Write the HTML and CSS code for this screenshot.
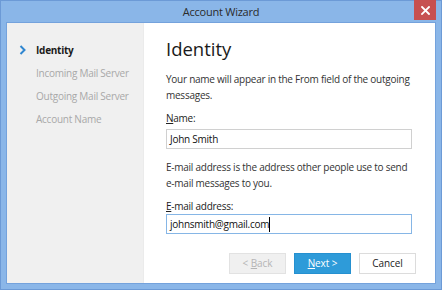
FILE: index.html
```html
<!DOCTYPE html>
<html>
<head>
<meta charset="utf-8">
<link rel="stylesheet" href="styles.css">
</head>
<body>
<div class="window">
  <div class="titlebar">
    <span></span>
    <span class="title">Account Wizard</span>
    <span class="close"><svg width="9" height="9" viewBox="0 0 9 9"><path d="M1 1 L8 8 M8 1 L1 8" stroke="#fff" stroke-width="1.8" stroke-linecap="square"/></svg></span>
  </div>
  <div class="client">
    <ul class="steps">
      <li class="step active"><svg class="chev" width="8" height="10" viewBox="0 0 8 10"><path d="M1.5 1 L5.5 5 L1.5 9" fill="none" stroke="#2f86d0" stroke-width="2"/></svg><span>Identity</span></li>
      <li class="step"><span></span><span>Incoming Mail Server</span></li>
      <li class="step"><span></span><span>Outgoing Mail Server</span></li>
      <li class="step"><span></span><span>Account Name</span></li>
    </ul>
    <div class="page">
      <div class="form">
        <h1 class="heading">Identity</h1>
        <p class="info">Your name will appear in the From field of the outgoing<br>messages.</p>
        <label class="label"><u>N</u>ame:</label>
        <div class="field">John Smith</div>
        <p class="info info2">E-mail address is the address other people use to send<br>e-mail messages to you.</p>
        <label class="label"><u>E</u>-mail address:</label>
        <div class="field focused">johnsmith@gmail.com<span class="caret"></span></div>
      </div>
      <div class="buttons">
        <button class="btn disabled">&lt; <u>B</u>ack</button>
        <button class="btn primary"><u>N</u>ext &gt;</button>
        <button class="btn">Cancel</button>
      </div>
    </div>
  </div>
</div>
</body>
</html>
```
FILE: styles.css
```css
html, body {
  margin: 0;
  padding: 0;
}
body {
  font-family: "Open Sans", "Noto Sans", sans-serif;
  font-size: 10px;
  letter-spacing: -0.25px;
  color: #222;
}
.window {
  width: 442px;
  height: 290px;
  box-sizing: border-box;
  background: #8ab6e8;
  border: 1px solid #6c9ad6;
  display: flex;
  flex-direction: column;
}
.titlebar {
  height: 21px;
  display: grid;
  grid-template-columns: 1fr auto 1fr;
  align-items: start;
}
.title {
  font-size: 11px;
  color: #2b2b2b;
  line-height: 22px;
}
.close {
  justify-self: end;
  margin-right: 5px;
  margin-top: -1px;
  width: 22px;
  height: 20px;
  background: #c75050;
  display: flex;
  align-items: center;
  justify-content: center;
}
.close svg { display: block; }
.client {
  margin: 0 5px 5px 5px;
  flex: 1;
  min-height: 0;
  border: 1px solid #74a2dc;
  background: #fff;
  display: flex;
}
.steps {
  list-style: none;
  margin: 0;
  padding: 15px 0 0 0;
  width: 136px;
  flex: none;
  background: #f0f0f0;
  border-right: 1px solid #ebebeb;
}
.step {
  display: grid;
  grid-template-columns: 29px auto;
  align-items: center;
  height: 23px;
  color: #a8a8a8;
  white-space: nowrap;
}
.step.active {
  color: #1a1a1a;
  font-weight: 700;
}
.chev {
  display: block;
  margin-left: 12px;
}
.page {
  flex: 1;
  min-width: 0;
  display: flex;
  flex-direction: column;
  justify-content: space-between;
}
.form {
  padding: 13px 23px 0 22px;
}
.heading {
  margin: 0;
  font-size: 18.5px;
  font-weight: 400;
  letter-spacing: 0;
  line-height: 26px;
  color: #1a1a1a;
}
.info {
  margin: 9px 0 0 0;
  line-height: 16px;
  color: #333;
  white-space: nowrap;
}
.info2 {
  margin-top: 10px;
}
.label {
  display: block;
  margin-top: 7px;
  line-height: 16px;
  color: #222;
}
.field {
  margin-top: 3px;
  height: 18px;
  border: 1px solid #d0d0d0;
  line-height: 18px;
  padding: 0 3px;
  color: #111;
}
.field.focused {
  margin-top: 0;
  border-color: #86b6e6;
}
.caret {
  display: inline-block;
  width: 1px;
  height: 15px;
  background: #000;
  vertical-align: -4px;
}
.buttons {
  display: flex;
  justify-content: flex-end;
  gap: 8px;
  padding: 0 19px 9px 0;
}
.btn {
  width: 57px;
  height: 21px;
  box-sizing: border-box;
  font-family: "Open Sans", "Noto Sans", sans-serif;
  font-size: 10px;
  letter-spacing: -0.1px;
  border: 1px solid #dcdcdc;
  background: #fff;
  color: #222;
  padding: 0;
  line-height: 19px;
}
.btn.disabled {
  background: #f0f0f0;
  border-color: #e2e2e2;
  color: #b5b5b5;
}
.btn.primary {
  background: #2e9bd9;
  border-color: #2590d0;
  color: #fff;
}
```
